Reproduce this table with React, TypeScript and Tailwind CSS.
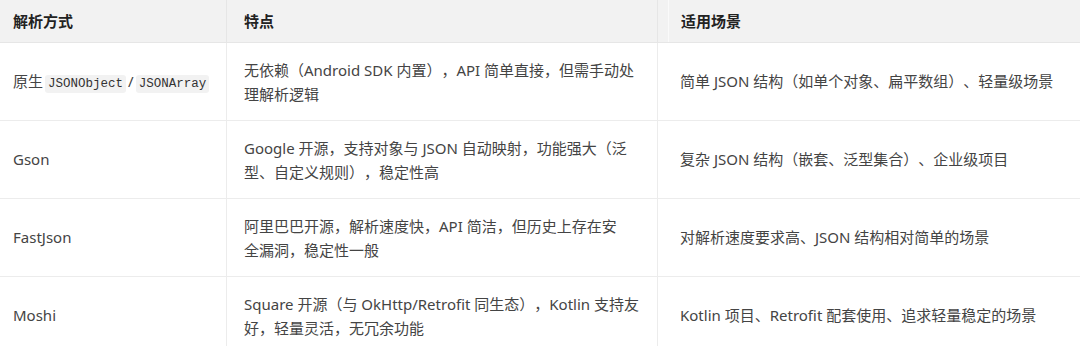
const rows = [
  {
    name: "native",
    feature: ["无依赖（Android SDK 内置），API 简单直接，但需手动处", "理解析逻辑"],
    scene: "简单 JSON 结构（如单个对象、扁平数组）、轻量级场景",
  },
  {
    name: "Gson",
    feature: ["Google 开源，支持对象与 JSON 自动映射，功能强大（泛", "型、自定义规则），稳定性高"],
    scene: "复杂 JSON 结构（嵌套、泛型集合）、企业级项目",
  },
  {
    name: "FastJson",
    feature: ["阿里巴巴开源，解析速度快，API 简洁，但历史上存在安", "全漏洞，稳定性一般"],
    scene: "对解析速度要求高、JSON 结构相对简单的场景",
  },
  {
    name: "Moshi",
    feature: ["Square 开源（与 OkHttp/Retrofit 同生态），Kotlin 支持友", "好，轻量灵活，无冗余功能"],
    scene: "Kotlin 项目、Retrofit 配套使用、追求轻量稳定的场景",
  },
];

function Code({ children }: { children: string }) {
  return (
    <code className="mx-[2px] rounded-[3px] bg-[#f2f2f2] px-[3px] py-[2px] font-['Liberation_Mono',monospace] text-[12.5px] text-[#333]">
      {children}
    </code>
  );
}

export default function App() {
  return (
    <div className="h-[346px] w-[1080px] overflow-hidden bg-white font-['Noto_Sans','Noto_Sans_CJK_SC',sans-serif] text-[15px] text-[#444] [text-spacing-trim:space-all]">
      <div className="grid grid-cols-[226px_431px_1fr]">
        <div className="flex h-[43px] items-center border-b border-[#e6e6e6] bg-[#f2f2f2] pl-[13px] font-bold text-[#222]">
          解析方式
        </div>
        <div className="flex h-[43px] items-center border-b border-l border-[#e6e6e6] bg-[#f2f2f2] pl-[17px] font-bold text-[#222]">
          特点
        </div>
        <div className="flex h-[43px] border-b border-l border-[#e6e6e6] bg-[#f2f2f2] pl-[10px]">
          <div className="flex flex-1 items-center border-l border-[#fafafa] pl-[12px] font-bold text-[#222]">
            适用场景
          </div>
        </div>

        {rows.map((r) => (
          <div key={r.name} className="contents">
            <div className="flex h-[78px] items-center whitespace-nowrap border-b border-[#ececec] pl-[13px]">
              {r.name === "native" ? (
                <span>
                  原生<Code>JSONObject</Code>/<Code>JSONArray</Code>
                </span>
              ) : (
                r.name
              )}
            </div>
            <div className="flex h-[78px] flex-col justify-center whitespace-nowrap border-b border-l border-[#ececec] pl-[17px] leading-[24px]">
              {r.feature.map((line) => (
                <div key={line}>{line}</div>
              ))}
            </div>
            <div className="flex h-[78px] items-center whitespace-nowrap border-b border-l border-[#ececec] pl-[22px]">
              {r.scene}
            </div>
          </div>
        ))}
      </div>
    </div>
  );
}
